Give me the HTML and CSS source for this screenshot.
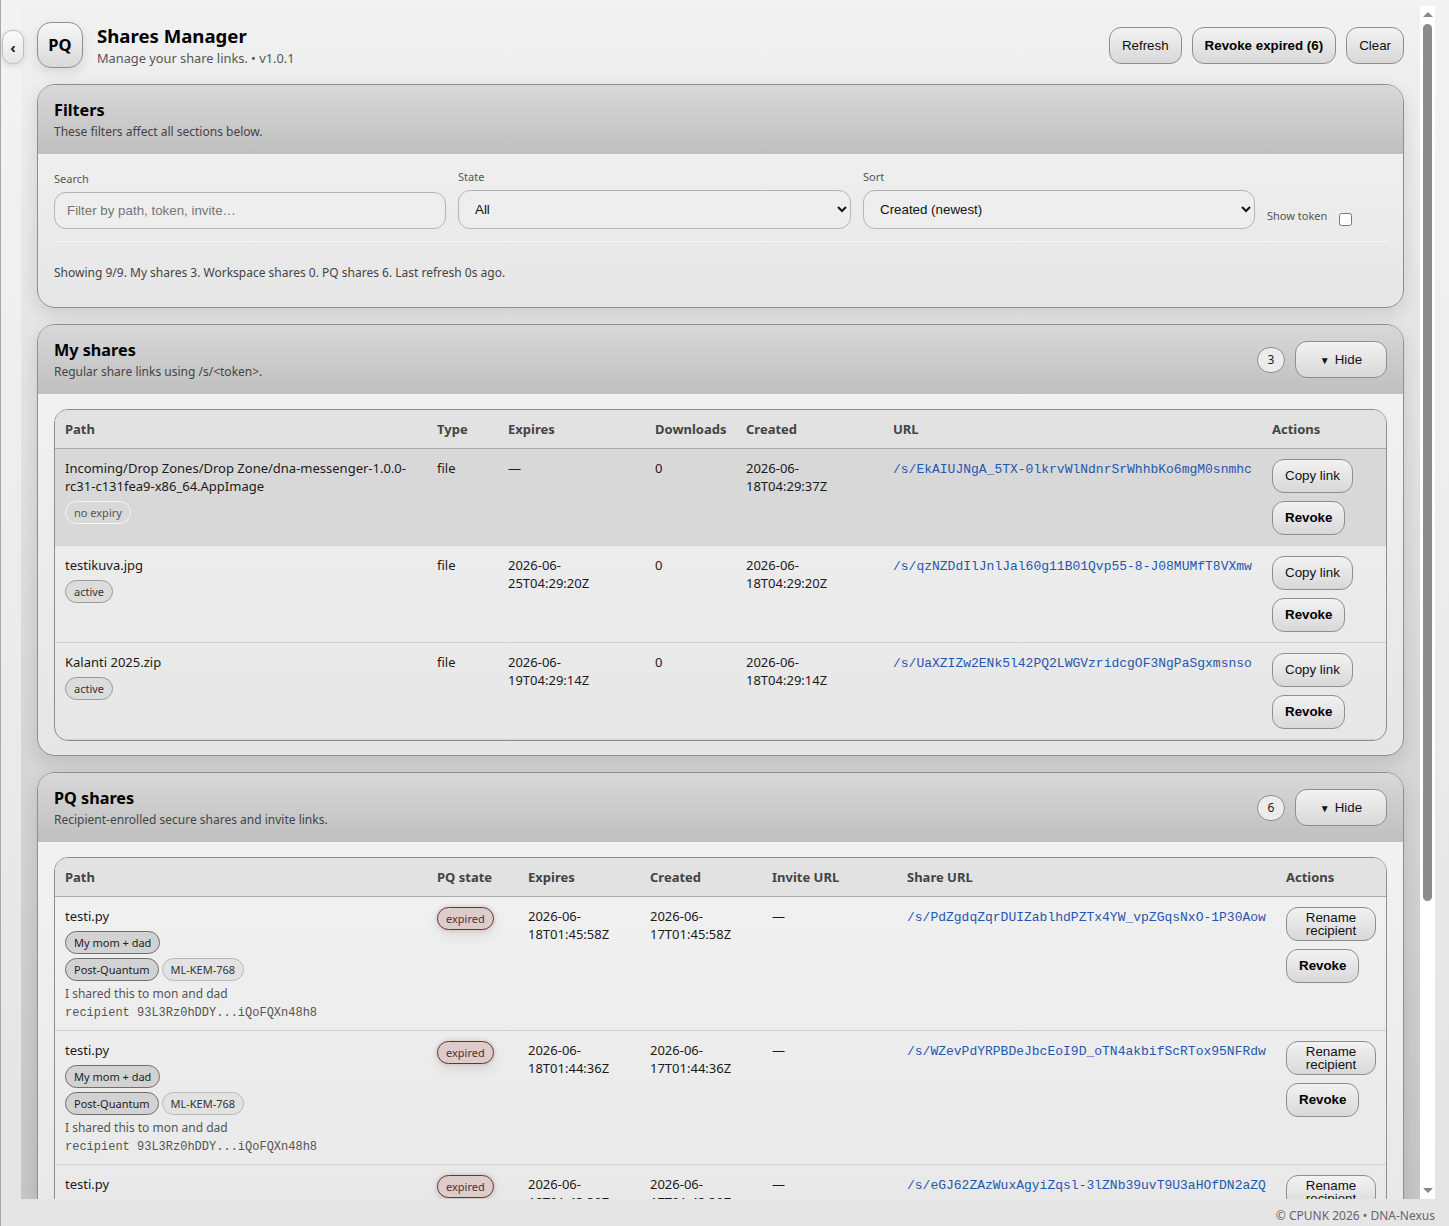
FILE: index.html
```html
<!DOCTYPE html>
<html lang="en">
<head>
  <meta charset="UTF-8" />
  <meta name="viewport" content="width=device-width, initial-scale=1.0"/>
  <title>Shares Manager</title>
  <link rel="stylesheet" href="styles.css">
</head>

<body>
  <button class="back-btn">‹</button>

  <div class="page">
    <main class="main">
      <div class="topbar">
        <div class="logo">PQ</div>
        <div class="topbar-text">
          <div class="app-title">Shares Manager</div>
          <div class="app-sub">Manage your share links. • v1.0.1</div>
        </div>
        <div class="topbar-actions">
          <button class="btn">Refresh</button>
          <button class="btn btn-bold">Revoke expired (6)</button>
          <button class="btn">Clear</button>
        </div>
      </div>

      <section class="card">
        <div class="card-head">
          <div>
            <h2>Filters</h2>
            <div class="card-sub">These filters affect all sections below.</div>
          </div>
        </div>
        <div class="card-body filters-body">
          <div class="filters">
            <label class="field field-search">
              <span>Search</span>
              <input type="text" placeholder="Filter by path, token, invite…" />
            </label>
            <label class="field">
              <span>State</span>
              <select><option>All</option></select>
            </label>
            <label class="field">
              <span>Sort</span>
              <select><option>Created (newest)</option></select>
            </label>
            <label class="show-token">
              <span>Show token</span>
              <input type="checkbox" />
            </label>
          </div>
          <div class="status">Showing 9/9. My shares 3. Workspace shares 0. PQ shares 6. Last refresh 0s ago.</div>
        </div>
      </section>

      <section class="card">
        <div class="card-head">
          <div>
            <h2>My shares</h2>
            <div class="card-sub">Regular share links using /s/&lt;token&gt;.</div>
          </div>
          <div class="head-right">
            <span class="count">3</span>
            <button class="btn btn-hide"><span class="caret">▼</span>Hide</button>
          </div>
        </div>
        <div class="card-body">
          <div class="table-wrap">
            <table class="shares-table">
              <colgroup>
                <col class="c-path"><col style="width:71px"><col style="width:147px"><col style="width:91px"><col style="width:147px"><col style="width:379px"><col style="width:124px">
              </colgroup>
              <thead>
                <tr><th>Path</th><th>Type</th><th>Expires</th><th>Downloads</th><th>Created</th><th>URL</th><th>Actions</th></tr>
              </thead>
              <tbody>
                <tr class="row-hover">
                  <td>Incoming/Drop Zones/Drop Zone/dna-messenger-1.0.0-rc31-c131fea9-x86_64.AppImage
                    <div class="tags"><span class="tag tag-light">no expiry</span></div>
                  </td>
                  <td>file</td>
                  <td>—</td>
                  <td>0</td>
                  <td>2026-06-18T04:29:37Z</td>
                  <td><a class="url">/s/EkAIUJNgA_5TX-0lkrvWlNdnrSrWhhbKo6mgM0snmhc</a></td>
                  <td><div class="actions"><button class="btn">Copy link</button><button class="btn btn-bold">Revoke</button></div></td>
                </tr>
                <tr>
                  <td>testikuva.jpg
                    <div class="tags"><span class="tag">active</span></div>
                  </td>
                  <td>file</td>
                  <td>2026-06-25T04:29:20Z</td>
                  <td>0</td>
                  <td>2026-06-18T04:29:20Z</td>
                  <td><a class="url">/s/qzNZDdIlJnlJal60g11B01Qvp55-8-J08MUMfT8VXmw</a></td>
                  <td><div class="actions"><button class="btn">Copy link</button><button class="btn btn-bold">Revoke</button></div></td>
                </tr>
                <tr>
                  <td>Kalanti 2025.zip
                    <div class="tags"><span class="tag">active</span></div>
                  </td>
                  <td>file</td>
                  <td>2026-06-19T04:29:14Z</td>
                  <td>0</td>
                  <td>2026-06-18T04:29:14Z</td>
                  <td><a class="url">/s/UaXZIZw2ENk5l42PQ2LWGVzridcgOF3NgPaSgxmsnso</a></td>
                  <td><div class="actions"><button class="btn">Copy link</button><button class="btn btn-bold">Revoke</button></div></td>
                </tr>
              </tbody>
            </table>
          </div>
        </div>
      </section>

      <section class="card card-last">
        <div class="card-head">
          <div>
            <h2>PQ shares</h2>
            <div class="card-sub">Recipient-enrolled secure shares and invite links.</div>
          </div>
          <div class="head-right">
            <span class="count">6</span>
            <button class="btn btn-hide"><span class="caret">▼</span>Hide</button>
          </div>
        </div>
        <div class="card-body">
          <div class="table-wrap">
            <table class="shares-table pq-table">
              <colgroup>
                <col class="c-path"><col style="width:91px"><col style="width:122px"><col style="width:122px"><col style="width:135px"><col style="width:379px"><col style="width:110px">
              </colgroup>
              <thead>
                <tr><th>Path</th><th>PQ state</th><th>Expires</th><th>Created</th><th>Invite URL</th><th>Share URL</th><th>Actions</th></tr>
              </thead>
              <tbody>
                <tr>
                  <td>testi.py
                    <div class="tags"><span class="tag tag-dark">My mom + dad</span></div>
                    <div class="tags tags-next"><span class="tag tag-dark">Post-Quantum</span><span class="tag tag-pale">ML-KEM-768</span></div>
                    <div class="note">I shared this to mon and dad</div>
                    <div class="recipient">recipient 93L3Rz0hDDY...iQoFQXn48h8</div>
                  </td>
                  <td><span class="tag tag-expired">expired</span></td>
                  <td>2026-06-18T01:45:58Z</td>
                  <td>2026-06-17T01:45:58Z</td>
                  <td>—</td>
                  <td><a class="url">/s/PdZgdqZqrDUIZablhdPZTx4YW_vpZGqsNxO-1P30Aow</a></td>
                  <td><div class="actions"><button class="btn btn-wrap">Rename recipient</button><button class="btn btn-bold">Revoke</button></div></td>
                </tr>
                <tr>
                  <td>testi.py
                    <div class="tags"><span class="tag tag-dark">My mom + dad</span></div>
                    <div class="tags tags-next"><span class="tag tag-dark">Post-Quantum</span><span class="tag tag-pale">ML-KEM-768</span></div>
                    <div class="note">I shared this to mon and dad</div>
                    <div class="recipient">recipient 93L3Rz0hDDY...iQoFQXn48h8</div>
                  </td>
                  <td><span class="tag tag-expired">expired</span></td>
                  <td>2026-06-18T01:44:36Z</td>
                  <td>2026-06-17T01:44:36Z</td>
                  <td>—</td>
                  <td><a class="url">/s/WZevPdYRPBDeJbcEoI9D_oTN4akbifScRTox95NFRdw</a></td>
                  <td><div class="actions"><button class="btn btn-wrap">Rename recipient</button><button class="btn btn-bold">Revoke</button></div></td>
                </tr>
                <tr>
                  <td>testi.py
                    <div class="tags"><span class="tag tag-dark">My mom + dad</span></div>
                    <div class="tags tags-next"><span class="tag tag-dark">Post-Quantum</span><span class="tag tag-pale">ML-KEM-768</span></div>
                    <div class="note">I shared this to mon and dad</div>
                    <div class="recipient">recipient 93L3Rz0hDDY...iQoFQXn48h8</div>
                  </td>
                  <td><span class="tag tag-expired">expired</span></td>
                  <td>2026-06-18T01:43:30Z</td>
                  <td>2026-06-17T01:43:30Z</td>
                  <td>—</td>
                  <td><a class="url">/s/eGJ62ZAzWuxAgyiZqsl-3lZNb39uvT9U3aHOfDN2aZQ</a></td>
                  <td><div class="actions"><button class="btn btn-wrap">Rename recipient</button><button class="btn btn-bold">Revoke</button></div></td>
                </tr>
              </tbody>
            </table>
          </div>
        </div>
      </section>
    </main>

    <div class="scrollbar">
      <span class="sb-up"></span>
      <span class="sb-thumb"></span>
      <span class="sb-down"></span>
    </div>
  </div>

  <footer class="footer">© CPUNK 2026 • DNA-Nexus</footer>
</body>
</html>
```

FILE: styles.css
```css
* {
  box-sizing: border-box;
}

html,
body {
  height: 100%;
}

body {
  margin: 0;
  position: relative;
  display: flex;
  flex-direction: column;
  overflow: hidden;
  border-left: 1px solid #a8a8a8;
  background: linear-gradient(#f3f3f3, #e4e4e4);
  font-family: "Noto Sans", sans-serif;
  font-size: 13px;
  line-height: 18px;
  color: #1a1a1a;
}

.page {
  flex: 1;
  min-height: 0;
  padding: 6px 14px 0 20px;
  display: flex;
}

.main {
  flex: 1;
  min-width: 0;
  overflow: hidden;
  padding: 16px 16px 14px;
  background: linear-gradient(#f1f1f1, #c6c6c6);
}

.scrollbar {
  flex: none;
  width: 15px;
  padding: 6px 3px;
  display: flex;
  flex-direction: column;
  background: #fff;
}

.sb-up,
.sb-down {
  flex: none;
  align-self: center;
  width: 0;
  height: 0;
  border-left: 5px solid transparent;
  border-right: 5px solid transparent;
}

.sb-up {
  border-bottom: 5px solid #888;
}

.sb-down {
  margin-top: auto;
  border-top: 5px solid #888;
}

.sb-thumb {
  flex: none;
  height: 877px;
  margin-top: 7px;
  border-radius: 5px;
  background: #8c8c8c;
}

.back-btn {
  position: absolute;
  left: 1px;
  top: 30px;
  width: 22px;
  height: 34px;
  padding: 0;
  border: 1px solid #bdbdbd;
  border-radius: 10px;
  background: linear-gradient(#fafafa, #e6e6e6);
  box-shadow: 0 2px 6px rgba(0, 0, 0, 0.12);
  font-family: "Noto Sans", sans-serif;
  font-size: 15px;
  font-weight: 700;
  color: #222;
  z-index: 5;
}

.topbar {
  display: flex;
  align-items: center;
  gap: 14px;
  margin-bottom: 16px;
}

.logo {
  width: 46px;
  height: 46px;
  display: flex;
  align-items: center;
  justify-content: center;
  border: 1px solid #8e8e8e;
  border-radius: 14px;
  background: linear-gradient(#f7f7f7, #d9d9d9);
  box-shadow: 0 4px 12px rgba(0, 0, 0, 0.1);
  font-size: 16.5px;
  font-weight: 700;
  color: #000;
}

.app-title {
  margin-bottom: 2px;
  font-size: 18.6px;
  line-height: 23px;
  font-weight: 700;
  color: #000;
}

.app-sub {
  font-size: 12.8px;
  line-height: 18px;
  color: #555;
}

.topbar-actions {
  margin-left: auto;
  display: flex;
  gap: 10px;
}

.btn {
  height: 37px;
  padding: 0 12px;
  border: 1px solid #8e8e8e;
  border-radius: 12px;
  background: linear-gradient(#f2f2f2, #d8d8d8);
  font-family: "Liberation Sans", Arial, sans-serif;
  font-size: 13.33px;
  color: #111;
  white-space: nowrap;
}

.btn-bold {
  font-weight: 700;
  color: #000;
}

.card {
  margin-bottom: 16px;
  border: 1px solid #8e8e8e;
  border-radius: 18px;
  background: linear-gradient(#f3f3f3, #e6e6e6);
  box-shadow: 0 6px 18px rgba(0, 0, 0, 0.12);
  overflow: hidden;
}

.card-last {
  margin-bottom: 0;
}

.card-head {
  height: 70px;
  padding: 14px 16px 0;
  display: flex;
  justify-content: space-between;
  align-items: flex-start;
  border-bottom: 1px solid #f4f4f4;
  background: linear-gradient(#d8d8d8, #bfbfbf);
}

.card-head h2 {
  margin: 0;
  font-size: 16.2px;
  line-height: 22px;
  font-weight: 700;
  color: #000;
}

.card-sub {
  font-size: 12px;
  line-height: 22px;
  color: #444;
}

.head-right {
  display: flex;
  align-items: center;
  gap: 10px;
  margin-top: 2px;
}

.count {
  width: 28px;
  height: 26px;
  display: flex;
  align-items: center;
  justify-content: center;
  border: 1px solid #8e8e8e;
  border-radius: 13px;
  background: #ececec;
  font-size: 12px;
  color: #222;
}

.btn-hide {
  width: 92px;
}

.caret {
  font-size: 10px;
  margin-right: 5px;
}

.card-body {
  padding: 14px 16px 14px;
}

.filters-body {
  padding-bottom: 25px;
}

.filters {
  display: grid;
  grid-template-columns: 392px 393px 392px auto;
  gap: 12px;
  align-items: end;
  padding-bottom: 12px;
  border-bottom: 1px solid #f8f8f8;
}

.field {
  display: flex;
  flex-direction: column;
  gap: 5px;
}

.field span,
.show-token span {
  font-size: 11px;
  line-height: 16px;
  color: #555;
}

.field input,
.field select {
  width: 100%;
  padding: 0 12px;
  border: 1px solid #b4b4b4;
  background: #eeeeee;
  font-family: "Liberation Sans", Arial, sans-serif;
  font-size: 13.33px;
  color: #111;
}

.field input {
  height: 37px;
  border-radius: 12px;
}

.field select {
  height: 39px;
  border-radius: 12px;
}

.field input::placeholder {
  color: #757575;
}

.show-token {
  display: flex;
  align-items: center;
  gap: 12px;
  padding-bottom: 3px;
}

.show-token span {
  margin-bottom: 2px;
}

.show-token input {
  margin: 5px 0 0;
}

.status {
  margin-top: 22px;
  font-size: 12px;
  color: #444;
}

.table-wrap {
  border: 1px solid #8e8e8e;
  border-radius: 14px;
  overflow: hidden;
}

.shares-table {
  width: 100%;
  table-layout: fixed;
  border-collapse: separate;
  border-spacing: 0;
}

.shares-table th {
  height: 39px;
  padding: 0 10px;
  text-align: left;
  font-weight: 700;
  color: #444;
  background: #e2e2e2;
  border-bottom: 1px solid #ababab;
}

.shares-table td {
  padding: 10px;
  vertical-align: top;
  border-bottom: 1px solid #d2d2d2;
  overflow-wrap: anywhere;
}

.pq-table td {
  padding-bottom: 8px;
}

.row-hover td {
  background: #d8d8d8;
}

.c-path {
  width: 372px;
}

.tags {
  display: flex;
  gap: 3px;
  margin-top: 6px;
}

.tags-next {
  margin-top: 4px;
}

.tag {
  display: inline-block;
  height: 23px;
  padding: 0 8px;
  border: 1px solid #9a9a9a;
  border-radius: 12px;
  background: #dcdcdc;
  font-size: 11px;
  line-height: 22px;
  color: #333;
}

.tag-light {
  border-color: #f4f4f4;
  background: transparent;
  color: #555;
}

.tag-dark {
  border-color: #6e6e6e;
  background: #d2d2d2;
  color: #222;
}

.tag-pale {
  border-color: #b8b8b8;
  background: #e2e2e2;
}

.tag-expired {
  border-color: #6b3232;
  background: #dccccc;
  color: #5a2c2c;
  box-shadow: 0 0 4px rgba(120, 50, 50, 0.25), 0 6px 14px rgba(0, 0, 0, 0.08);
}

.note {
  margin-top: 4px;
  font-size: 12px;
  color: #555;
}

.recipient {
  margin-top: 1px;
  font-family: "Liberation Mono", monospace;
  font-size: 12px;
  color: #555;
}

.url {
  font-family: "Liberation Mono", monospace;
  font-size: 13px;
  color: #1f57b0;
  overflow-wrap: anywhere;
}

.actions {
  display: flex;
  flex-direction: column;
  align-items: flex-start;
  gap: 8px;
}

.actions .btn {
  height: 34px;
  padding-bottom: 2px;
}

.actions .btn-wrap {
  width: 100%;
  padding: 3px 12px;
  line-height: 13px;
  white-space: normal;
}

.footer {
  height: 27px;
  padding-right: 14px;
  text-align: right;
  background: #e5e5e5;
  font-size: 12px;
  line-height: 33px;
  color: #666;
}
```
